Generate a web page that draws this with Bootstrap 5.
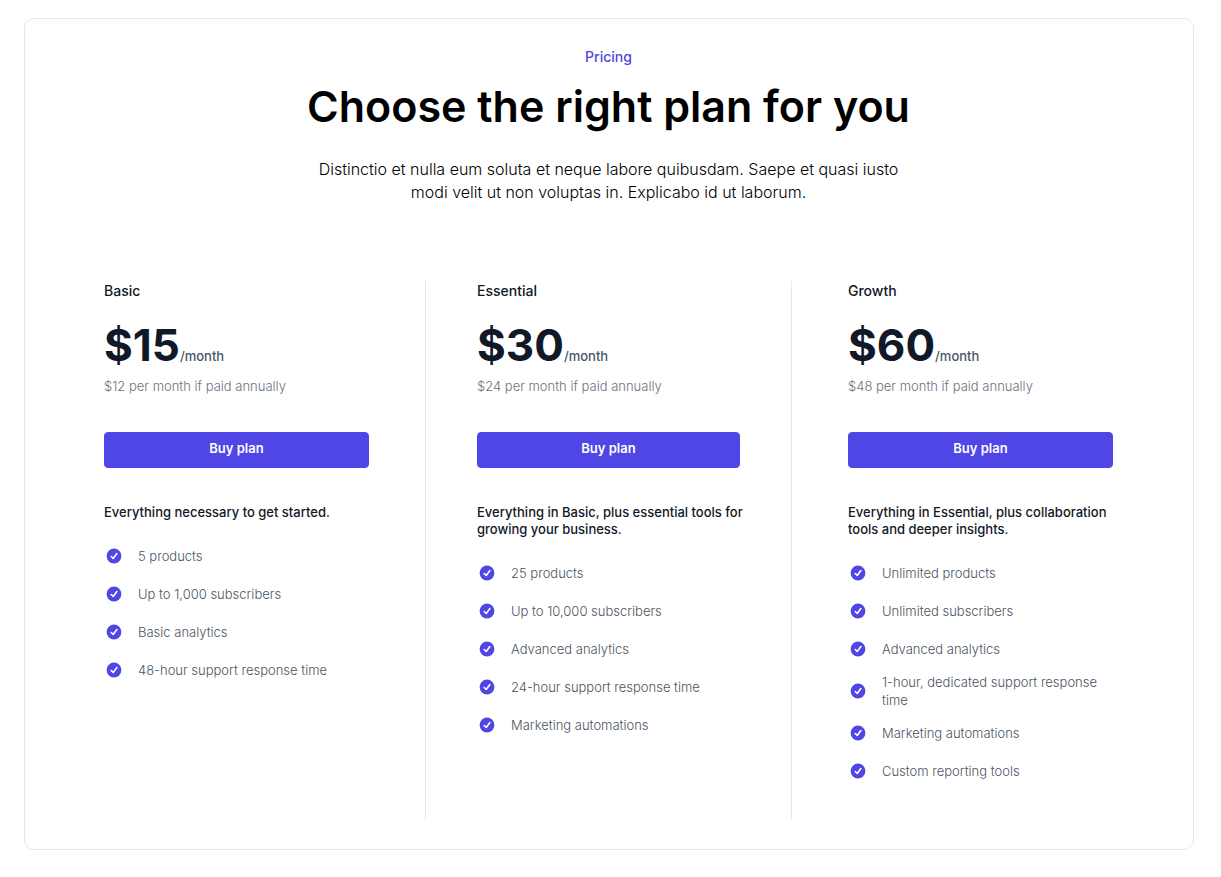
<!DOCTYPE html>
<html lang="en">
<head>
<meta charset="utf-8">
<meta name="viewport" content="width=device-width, initial-scale=1">
<title>Pricing</title>
<link href="https://cdn.jsdelivr.net/npm/bootstrap@5.3.0/dist/css/bootstrap.min.css" rel="stylesheet">
<style>
  :root { --brand: #4f46e5; --ink: #111827; --line: #e5e7eb; }
  body { font-family: Inter, "Liberation Sans", sans-serif; font-size: 13px; line-height: 18px; color: #4b5563; background: #fff; }
  .page { padding: 18px 27px 27px 24px; }
  .pricing { border: 1px solid var(--line); border-radius: 10px; padding: 28px 80px 29px 79px; }
  .eyebrow { font-size: 14px; line-height: 20px; font-weight: 500; color: var(--brand); margin: 0; }
  .headline { font-size: 43px; line-height: 56px; font-weight: 600; color: #000; margin: 11px 0 0; }
  .intro { font-size: 16px; line-height: 23px; font-weight: 350; color: #000; max-width: 610px; margin: 24px auto 0; }
  .plans { margin-top: 77px; grid-template-columns: 1fr; }
  .plan { padding-bottom: 35px; }
  .plan-name { font-size: 14px; line-height: 20px; font-weight: 500; color: var(--ink); margin: 0; }
  .amount { font-size: 44px; line-height: 56px; font-weight: 700; color: var(--ink); }
  .price { margin: 16px 0 0; }
  .period { font-weight: 500; }
  .annual { font-weight: 300; color: #6b7280; margin: 4px 0 0; }
  .btn-buy { --bs-btn-color: #fff; --bs-btn-bg: var(--brand); --bs-btn-border-color: var(--brand); --bs-btn-hover-color: #fff; --bs-btn-hover-bg: #4338ca; --bs-btn-hover-border-color: #4338ca; --bs-btn-font-size: 13px; --bs-btn-font-weight: 600; --bs-btn-line-height: 18px; --bs-btn-border-radius: 4px; padding-top: 6px; padding-bottom: 10px; margin-top: 37px; }
  .summary { line-height: 17px; font-weight: 500; color: var(--ink); margin: 36px -8px 0 0; }
  .perks { margin: 21px 0 0; gap: 10px; }
  .perks li { gap: 14px; min-height: 28px; font-weight: 300; }
  .perks svg { width: 20px; height: 20px; flex: none; fill: var(--brand); }
  @media (min-width: 992px) {
    .plans { grid-template-columns: 321fr 366fr 322fr; }
    .plan:first-child { padding-right: 56px; }
    .plan:nth-child(2) { padding-left: 51px; padding-right: 51px; }
    .plan:last-child { padding-left: 56px; }
    .plan + .plan { border-left: 1px solid var(--line); }
  }
  @media (max-width: 991px) {
    .pricing { padding-left: 24px; padding-right: 24px; }
  }
</style>
</head>
<body>
<svg class="d-none" aria-hidden="true">
  <symbol id="check" viewBox="0 0 20 20"><circle cx="10" cy="10" r="7.400"/><path d="M7.200 10.500l2 2 3.700-4.900" fill="none" stroke="#fff" stroke-width="1.600" stroke-linecap="round" stroke-linejoin="round"/></symbol>
</svg>
<main class="page">
  <section class="pricing">
    <header class="text-center">
      <p class="eyebrow">Pricing</p>
      <h1 class="headline">Choose the right plan for you</h1>
      <p class="intro">Distinctio et nulla eum soluta et neque labore quibusdam. Saepe et quasi iusto modi velit ut non voluptas in. Explicabo id ut laborum.</p>
    </header>
    <div class="plans d-grid">
      <article class="plan">
        <h2 class="plan-name">Basic</h2>
        <p class="price"><span class="amount">$15</span><span class="period">/month</span></p>
        <p class="annual">$12 per month if paid annually</p>
        <button type="button" class="btn btn-buy w-100">Buy plan</button>
        <p class="summary">Everything necessary to get started.</p>
        <ul class="perks list-unstyled d-flex flex-column">
          <li class="d-flex align-items-center"><svg><use href="#check"/></svg><span>5 products</span></li>
          <li class="d-flex align-items-center"><svg><use href="#check"/></svg><span>Up to 1,000 subscribers</span></li>
          <li class="d-flex align-items-center"><svg><use href="#check"/></svg><span>Basic analytics</span></li>
          <li class="d-flex align-items-center"><svg><use href="#check"/></svg><span>48-hour support response time</span></li>
        </ul>
      </article>
      <article class="plan">
        <h2 class="plan-name">Essential</h2>
        <p class="price"><span class="amount">$30</span><span class="period">/month</span></p>
        <p class="annual">$24 per month if paid annually</p>
        <button type="button" class="btn btn-buy w-100">Buy plan</button>
        <p class="summary">Everything in Basic, plus essential tools for growing your business.</p>
        <ul class="perks list-unstyled d-flex flex-column">
          <li class="d-flex align-items-center"><svg><use href="#check"/></svg><span>25 products</span></li>
          <li class="d-flex align-items-center"><svg><use href="#check"/></svg><span>Up to 10,000 subscribers</span></li>
          <li class="d-flex align-items-center"><svg><use href="#check"/></svg><span>Advanced analytics</span></li>
          <li class="d-flex align-items-center"><svg><use href="#check"/></svg><span>24-hour support response time</span></li>
          <li class="d-flex align-items-center"><svg><use href="#check"/></svg><span>Marketing automations</span></li>
        </ul>
      </article>
      <article class="plan">
        <h2 class="plan-name">Growth</h2>
        <p class="price"><span class="amount">$60</span><span class="period">/month</span></p>
        <p class="annual">$48 per month if paid annually</p>
        <button type="button" class="btn btn-buy w-100">Buy plan</button>
        <p class="summary">Everything in Essential, plus collaboration tools and deeper insights.</p>
        <ul class="perks list-unstyled d-flex flex-column">
          <li class="d-flex align-items-center"><svg><use href="#check"/></svg><span>Unlimited products</span></li>
          <li class="d-flex align-items-center"><svg><use href="#check"/></svg><span>Unlimited subscribers</span></li>
          <li class="d-flex align-items-center"><svg><use href="#check"/></svg><span>Advanced analytics</span></li>
          <li class="d-flex align-items-center"><svg><use href="#check"/></svg><span>1-hour, dedicated support response time</span></li>
          <li class="d-flex align-items-center"><svg><use href="#check"/></svg><span>Marketing automations</span></li>
          <li class="d-flex align-items-center"><svg><use href="#check"/></svg><span>Custom reporting tools</span></li>
        </ul>
      </article>
    </div>
  </section>
</main>
<script src="https://cdn.jsdelivr.net/npm/bootstrap@5.3.0/dist/js/bootstrap.bundle.min.js"></script>
</body>
</html>
